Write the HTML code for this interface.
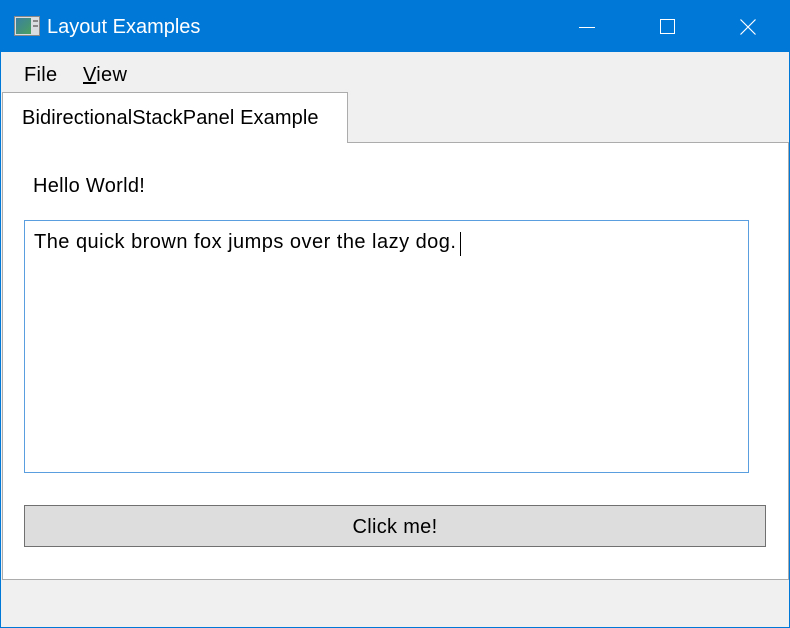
<!DOCTYPE html>
<html><head><style>
body{margin:0;width:790px;height:628px;overflow:hidden;background:#f0f0f0;font-family:"Liberation Sans","DejaVu Sans",sans-serif;position:relative}
div{position:absolute;box-sizing:border-box}
.t{white-space:nowrap;color:#000}
.b{font-size:20px;letter-spacing:0.3px}
</style></head><body>
<div style="left:0;top:0;width:790px;height:628px;border:1px solid #0078d7;border-top:none"></div>
<div style="left:0;top:0;width:790px;height:52px;background:#0078d7"></div>
<div style="left:14px;top:16px;width:26px;height:20px;background:#d8dde0;border:1px solid #888">
 <div style="left:1px;top:1px;width:15px;height:16px;background:linear-gradient(135deg,#3a7fa0,#4aa060)"></div>
 <div style="left:18px;top:3px;width:5px;height:2px;background:#888"></div>
 <div style="left:18px;top:8px;width:5px;height:2px;background:#888"></div>
</div>
<div class="t" style="left:47px;top:16px;font-size:20px;color:#fff">Layout Examples</div>
<div style="left:579px;top:27px;width:16px;height:1px;background:#fff"></div>
<div style="left:660px;top:19px;width:15px;height:15px;border:1px solid #fff"></div>
<svg style="position:absolute;left:740px;top:19px" width="16" height="16"><path d="M0.5 0.5L15.5 15.5M15.5 0.5L0.5 15.5" stroke="#fff" stroke-width="1.2"/></svg>
<div class="t b" style="left:24px;top:64px">File</div>
<div class="t b" style="left:83px;top:64px"><u>V</u>iew</div>
<div style="left:2px;top:142px;width:787px;height:438px;background:#fff;border:1px solid #acacac"></div>
<div style="left:2px;top:92px;width:346px;height:51px;background:#fff;border:1px solid #acacac;border-bottom:none"></div>
<div class="t" style="left:22px;top:107px;font-size:20px;letter-spacing:0.1px">BidirectionalStackPanel Example</div>
<div class="t b" style="left:33px;top:175px">Hello World!</div>
<div style="left:24px;top:220px;width:725px;height:253px;border:1px solid #5b9ee0;background:#fff"></div>
<div class="t" style="left:34px;top:231px;font-size:20px;letter-spacing:0.48px">The quick brown fox jumps over the lazy dog.</div>
<div style="left:460px;top:232px;width:1px;height:24px;background:#000"></div>
<div style="left:24px;top:505px;width:742px;height:42px;background:#dddddd;border:1px solid #707070"></div>
<div class="t b" style="left:24px;top:516px;width:742px;text-align:center">Click me!</div>
</body></html>
